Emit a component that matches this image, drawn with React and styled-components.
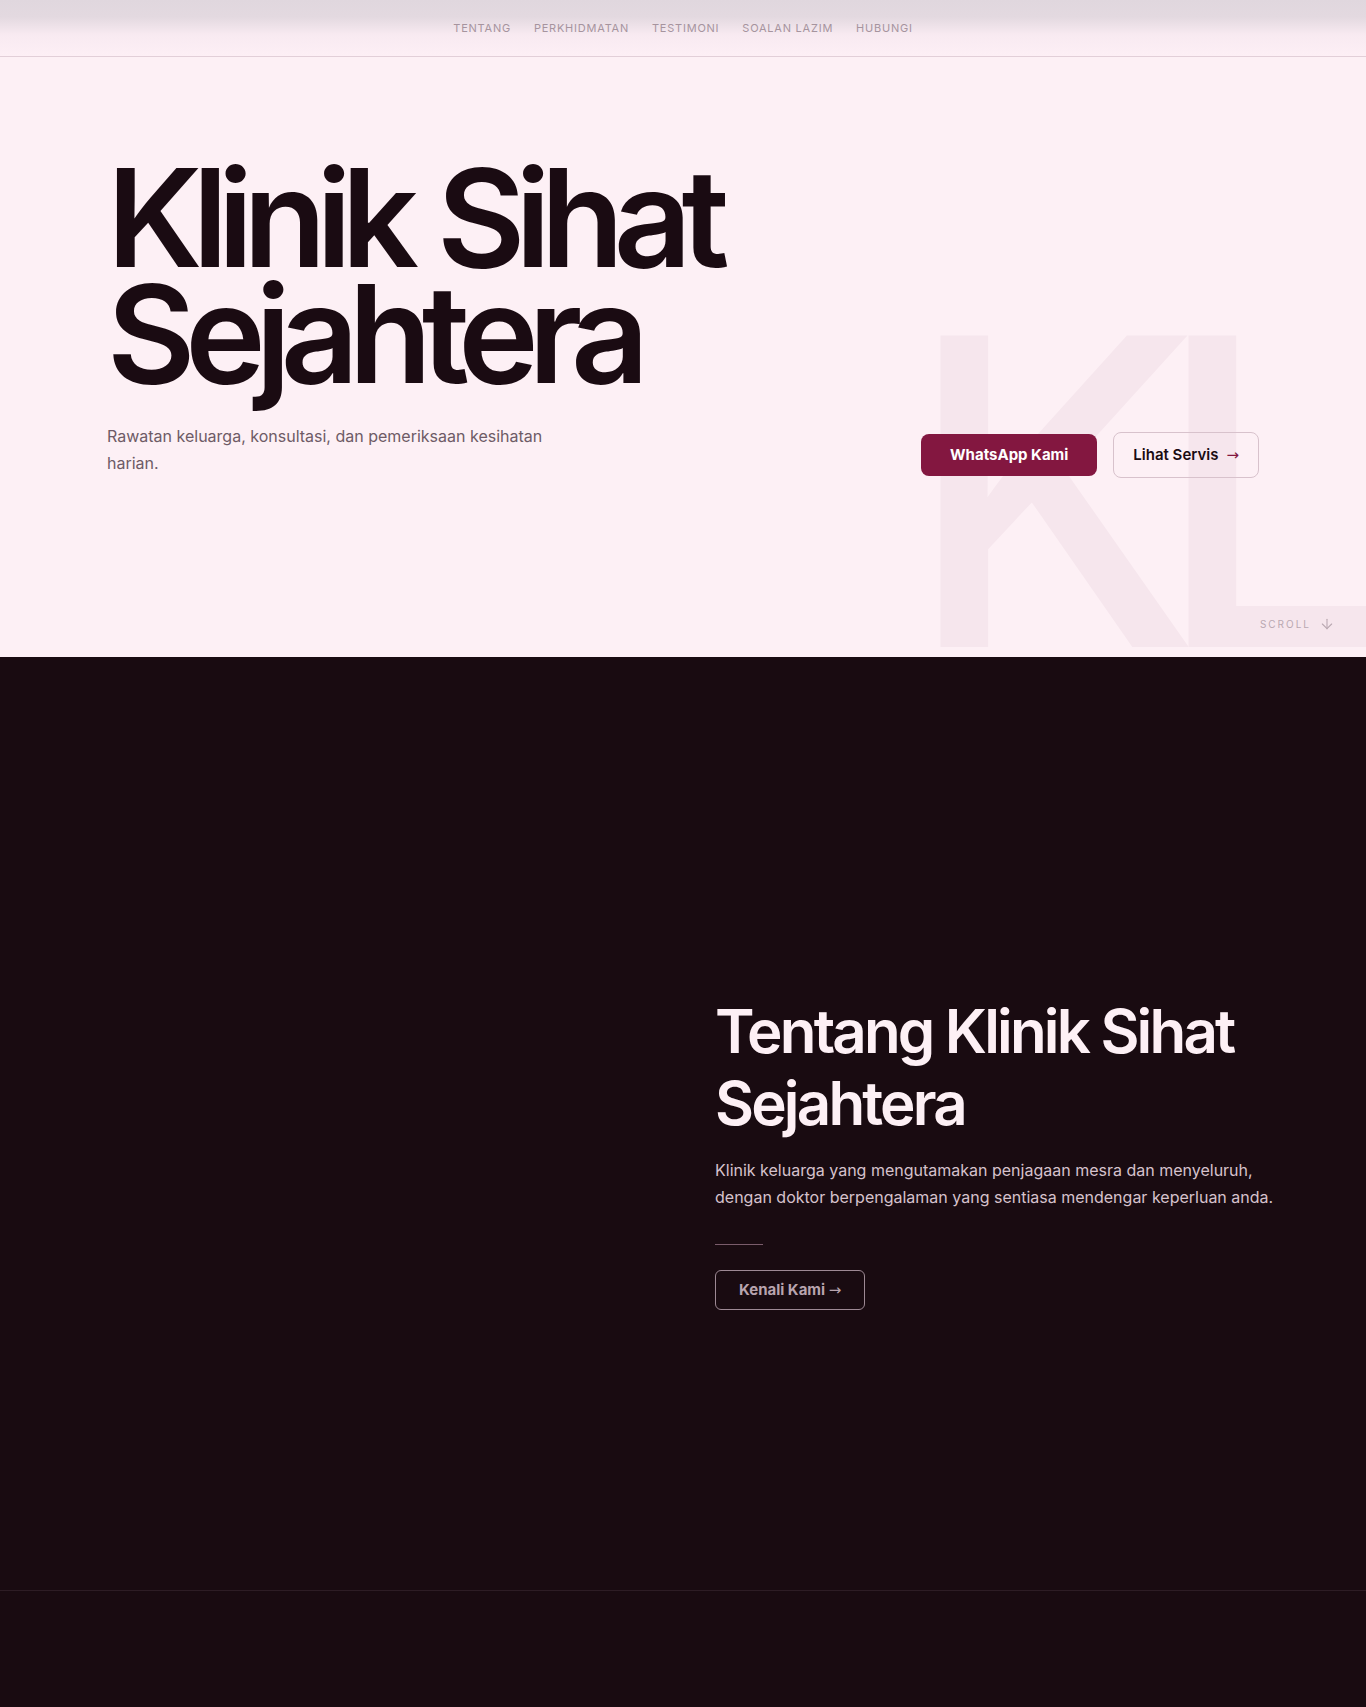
import styled, { createGlobalStyle } from "styled-components";
import { ArrowDown } from "lucide-react";

const links = ["Tentang", "Perkhidmatan", "Testimoni", "Soalan Lazim", "Hubungi"];

export default function App() {
  return (
    <>
      <GlobalStyle />
      <TopNav>
        {links.map((l) => (
          <NavLink key={l} href={`#${l.toLowerCase().replace(" ", "-")}`}>
            {l}
          </NavLink>
        ))}
      </TopNav>
      <Hero>
        <Watermark aria-hidden="true">KL</Watermark>
        <HeroInner>
          <HeroTitle>
            Klinik Sihat
            <br />
            Sejahtera
          </HeroTitle>
          <HeroRow>
            <Lead>Rawatan keluarga, konsultasi, dan pemeriksaan kesihatan harian.</Lead>
            <Actions>
              <PrimaryButton href="#hubungi">WhatsApp Kami</PrimaryButton>
              <OutlineButton href="#perkhidmatan">
                Lihat Servis <Arrow $accent>→</Arrow>
              </OutlineButton>
            </Actions>
          </HeroRow>
        </HeroInner>
        <ScrollHint>
          SCROLL
          <ArrowDown size={16} strokeWidth={1.6} />
        </ScrollHint>
      </Hero>
      <About id="tentang">
        <AboutGrid>
          <div />
          <AboutText>
            <AboutTitle>Tentang Klinik Sihat Sejahtera</AboutTitle>
            <AboutBody>
              Klinik keluarga yang mengutamakan penjagaan mesra dan menyeluruh, dengan doktor
              berpengalaman yang sentiasa mendengar keperluan anda.
            </AboutBody>
            <Rule />
            <GhostButton href="#tentang">
              Kenali Kami <Arrow>→</Arrow>
            </GhostButton>
          </AboutText>
        </AboutGrid>
      </About>
      <Footer />
    </>
  );
}

const GlobalStyle = createGlobalStyle`
  * { box-sizing: border-box; }
  body {
    margin: 0;
    font-family: Inter, "Noto Sans", sans-serif;
    background: #190b11;
    -webkit-font-smoothing: antialiased;
  }
  a { text-decoration: none; }
`;

const TopNav = styled.nav`
  position: fixed;
  top: 0;
  left: 0;
  right: 0;
  z-index: 10;
  height: 57px;
  display: flex;
  justify-content: center;
  align-items: center;
  gap: 23px;
  background: linear-gradient(to bottom, #e0d7de 0%, #e3d9e0 30%, #f8eaf1 62%, #fdeff5 100%);
  border-bottom: 1px solid #e2cfd8;
`;

const NavLink = styled.a`
  font-size: 11px;
  letter-spacing: 0.07em;
  text-transform: uppercase;
  color: #a6949e;
`;

const Hero = styled.header`
  position: relative;
  height: 657px;
  overflow: hidden;
  background: #fdf0f5;
`;

const Watermark = styled.div`
  position: absolute;
  left: 906px;
  bottom: -48px;
  font-size: 428px;
  font-weight: 530;
  line-height: 1;
  letter-spacing: -0.108em;
  color: #f6e6ed;
  white-space: nowrap;
  user-select: none;
`;

const HeroInner = styled.div`
  position: relative;
  max-width: 1152px;
  margin: 0 auto;
  padding-top: 160px;
`;

const HeroTitle = styled.h1`
  margin: 0;
  font-size: 136px;
  font-weight: 600;
  line-height: 0.85;
  letter-spacing: -0.075em;
  word-spacing: 0.03em;
  color: #1a0b12;
`;

const HeroRow = styled.div`
  display: flex;
  justify-content: space-between;
  align-items: flex-end;
  margin-top: 32px;
`;

const Lead = styled.p`
  margin: 0;
  max-width: 448px;
  font-size: 16px;
  line-height: 1.7;
  color: #6e5b66;
`;

const Actions = styled.div`
  display: flex;
  align-items: center;
  gap: 16px;
`;

const PrimaryButton = styled.a`
  display: inline-flex;
  align-items: center;
  padding: 12px 29px;
  border-radius: 8px;
  background: #831740;
  color: #fff;
  font-size: 15px;
  font-weight: 700;
  line-height: 18px;
`;

const OutlineButton = styled.a`
  display: inline-flex;
  align-items: center;
  gap: 8px;
  padding: 13px 19px 13px 19px;
  border: 1px solid #d8c2cc;
  border-radius: 8px;
  color: #1a0b12;
  font-size: 15px;
  font-weight: 600;
  line-height: 18px;
`;

const Arrow = styled.span`
  font-family: "DejaVu Sans", sans-serif;
  font-weight: 400;
  color: ${(p) => (p.$accent ? "#831740" : "inherit")};
`;

const ScrollHint = styled.div`
  position: absolute;
  right: 31px;
  bottom: 25px;
  display: flex;
  align-items: center;
  gap: 8px;
  font-size: 10px;
  letter-spacing: 0.2em;
  color: #b9a8b1;
`;

const About = styled.section`
  min-height: 933px;
  display: flex;
  align-items: center;
  padding: 128px 0 70px;
  background: #190b11;
`;

const AboutGrid = styled.div`
  width: 100%;
  max-width: 1200px;
  margin: 0 auto;
  display: grid;
  grid-template-columns: 1fr 1fr;
  gap: 64px;
`;

const AboutText = styled.div`
  display: flex;
  flex-direction: column;
  align-items: flex-start;
`;

const AboutTitle = styled.h2`
  margin: 0;
  font-size: 60px;
  font-weight: 600;
  line-height: 1.2;
  letter-spacing: -0.047em;
  color: #fdf0f5;
`;

const AboutBody = styled.p`
  margin: 18px 0 0;
  font-size: 16px;
  line-height: 1.7;
  color: #d6c2cc;
`;

const Rule = styled.span`
  display: block;
  width: 48px;
  height: 1px;
  margin-top: 33px;
  background: #7a5c6b;
`;

const GhostButton = styled.a`
  margin-top: 25px;
  padding: 10px 23px;
  border: 1px solid #9d8994;
  border-radius: 6px;
  color: #b8a4ae;
  font-size: 15px;
  font-weight: 700;
  line-height: 18px;
`;

const Footer = styled.footer`
  height: 117px;
  background: #190b11;
  border-top: 1px solid #2d1d25;
`;
